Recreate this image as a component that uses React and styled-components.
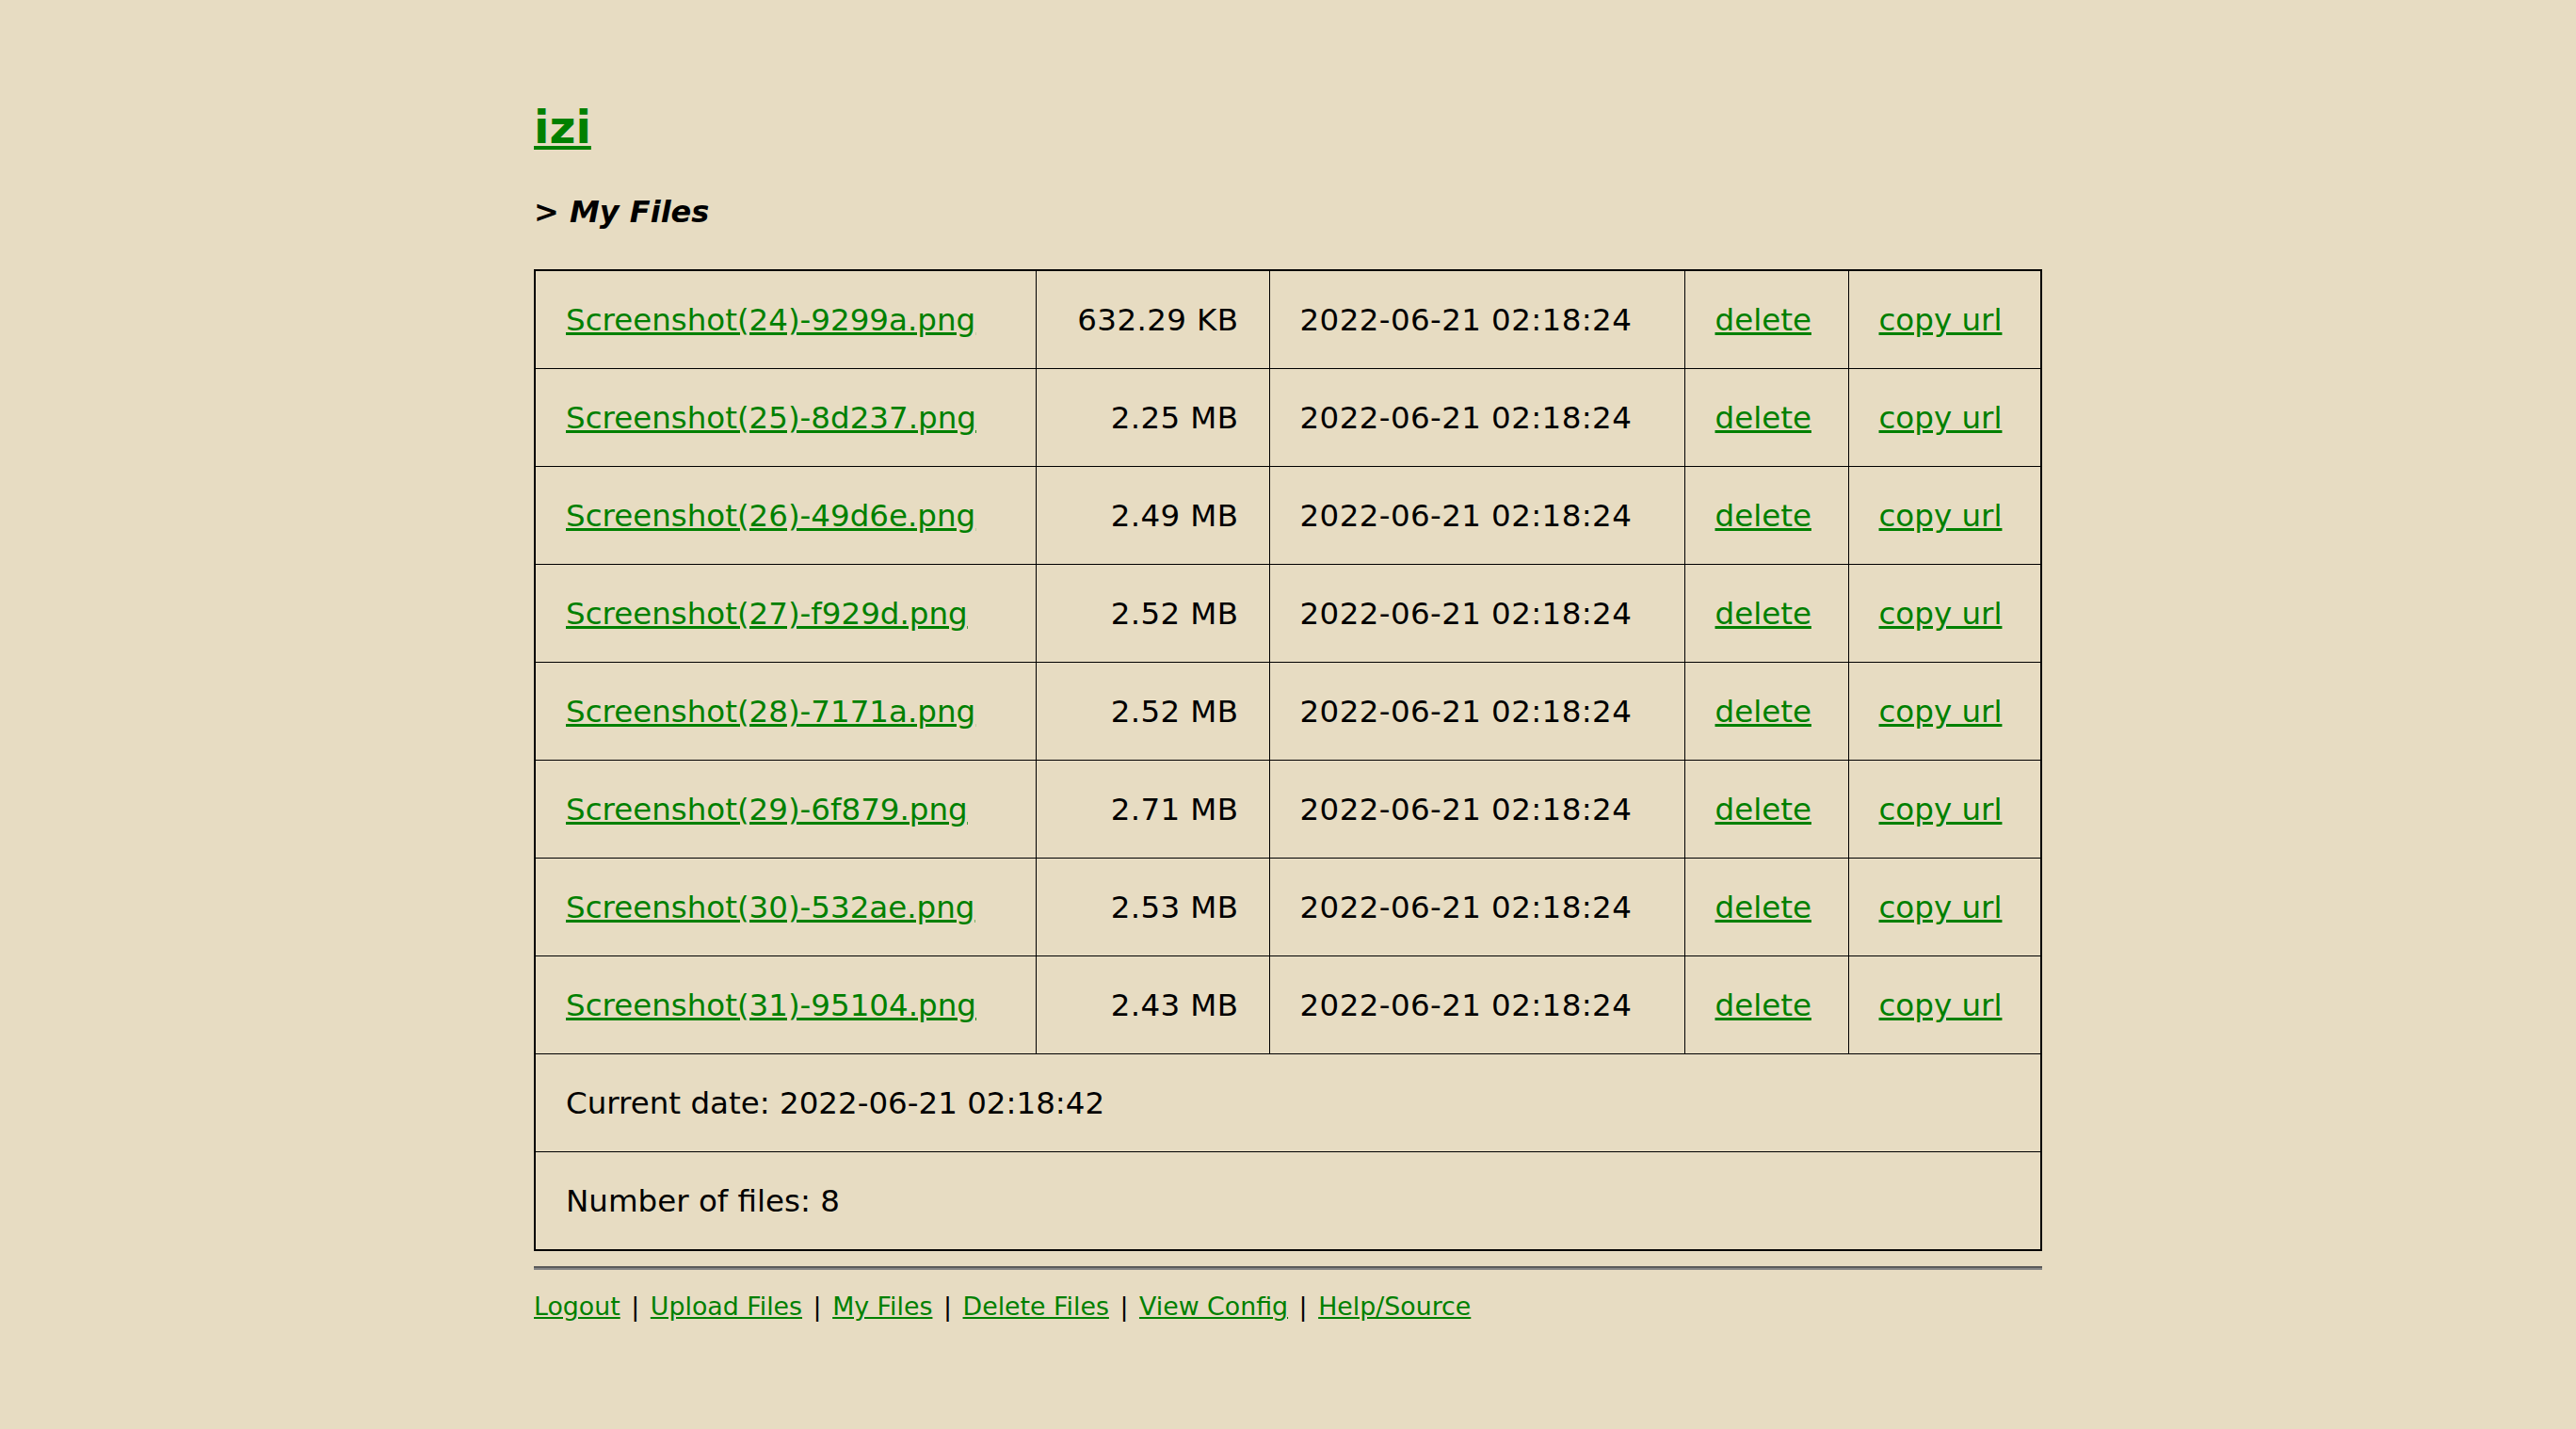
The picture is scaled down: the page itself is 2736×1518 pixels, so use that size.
import React from "react";
import styled, { createGlobalStyle } from "styled-components";

const GlobalStyle = createGlobalStyle`
  html, body {
    margin: 0;
    padding: 0;
    background: #e7dcc2;
  }
  body {
    font-family: "DejaVu Sans", Verdana, sans-serif;
    font-size: 32.5px;
    color: #000;
  }
  a {
    color: #008000;
  }
`;

const Page = styled.div`
  width: 1602px;
  margin: 0 auto;
  padding-top: 107px;
  padding-bottom: 60px;
`;

const Title = styled.h2`
  margin: 0 0 43px;
  font-size: 48px;
  font-weight: bold;
  line-height: normal;
  a {
    color: #008000;
  }
`;

const Crumb = styled.h3`
  margin: 0 0 42px;
  font-size: 32px;
  font-weight: bold;
  font-style: italic;
  line-height: normal;
`;

const FileTable = styled.table`
  width: 100%;
  border-collapse: collapse;
  table-layout: fixed;
  border: 2px solid #000;
`;

const Cell = styled.td`
  border: 1px solid #000;
  padding: 33px 32px 32px;
  line-height: normal;
  white-space: nowrap;
  text-align: ${(p) => (p.$right ? "right" : "left")};
  letter-spacing: ${(p) => (p.$digits ? "0.4px" : "normal")};
`;

const Rule = styled.hr`
  margin: 16px 0 0;
  height: 0;
  border: 0;
  border-top: 2px solid #5a5a5a;
  border-bottom: 2px solid #848484;
`;

const Footer = styled.nav`
  margin-top: 23px;
  font-size: 26.8px;
  line-height: normal;
`;

const Sep = styled.span`
  margin: 0 3px;
`;

const files = [
  ["Screenshot(24)-9299a.png", "632.29 KB"],
  ["Screenshot(25)-8d237.png", "2.25 MB"],
  ["Screenshot(26)-49d6e.png", "2.49 MB"],
  ["Screenshot(27)-f929d.png", "2.52 MB"],
  ["Screenshot(28)-7171a.png", "2.52 MB"],
  ["Screenshot(29)-6f879.png", "2.71 MB"],
  ["Screenshot(30)-532ae.png", "2.53 MB"],
  ["Screenshot(31)-95104.png", "2.43 MB"],
];

const links = ["Logout", "Upload Files", "My Files", "Delete Files", "View Config", "Help/Source"];

export default function App() {
  return (
    <>
      <GlobalStyle />
      <Page>
        <Title>
          <a href="#">izi</a>
        </Title>
        <Crumb>&gt; My Files</Crumb>
        <FileTable>
          <colgroup>
            <col style={{ width: 532 }} />
            <col style={{ width: 248 }} />
            <col style={{ width: 441 }} />
            <col style={{ width: 174 }} />
            <col style={{ width: 205 }} />
          </colgroup>
          <tbody>
            {files.map(([name, size]) => (
              <tr key={name}>
                <Cell>
                  <a href="#">{name}</a>
                </Cell>
                <Cell $right $digits>{size}</Cell>
                <Cell $digits>2022-06-21 02:18:24</Cell>
                <Cell>
                  <a href="#">delete</a>
                </Cell>
                <Cell>
                  <a href="#">copy url</a>
                </Cell>
              </tr>
            ))}
            <tr>
              <Cell colSpan={5}>Current date: 2022-06-21 02:18:42</Cell>
            </tr>
            <tr>
              <Cell colSpan={5}>Number of files: 8</Cell>
            </tr>
          </tbody>
        </FileTable>
        <Rule />
        <Footer>
          {links.map((l, i) => (
            <React.Fragment key={l}>
              {i > 0 && <Sep> | </Sep>}
              <a href="#">{l}</a>
            </React.Fragment>
          ))}
        </Footer>
      </Page>
    </>
  );
}
